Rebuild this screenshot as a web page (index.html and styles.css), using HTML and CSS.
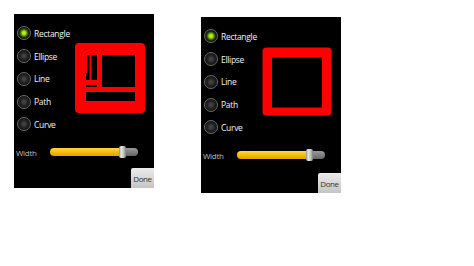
FILE: index.html
```html
<!DOCTYPE html>
<html lang="en">
<head>
  <meta charset="UTF-8">
  <title>Shape Drawing</title>
  <link rel="stylesheet" href="styles.css">
</head>
<body>
  <div class="shots">

    <div class="phone">
      <div class="main">
        <div class="choices">
          <div class="choice checked"><span class="radio"></span>Rectangle</div>
          <div class="choice"><span class="radio"></span>Ellipse</div>
          <div class="choice"><span class="radio"></span>Line</div>
          <div class="choice"><span class="radio"></span>Path</div>
          <div class="choice"><span class="radio"></span>Curve</div>
        </div>
        <svg class="canvas" width="80" height="80" viewBox="0 0 80 80">
          <path fill="#f00" fill-rule="evenodd" d="M7 3 H69 Q73 3 73 7 V69 Q73 73 69 73 H7 Q3 73 3 69 V7 Q3 3 7 3 Z M14 15 V61 H63 V15 Z"/>
          <rect x="25" y="15" width="5" height="37" fill="#f00"/>
          <rect x="14" y="47" width="49" height="5" fill="#f00"/>
          <rect x="17.5" y="15" width="2" height="30" fill="#f00"/>
          <rect x="14" y="40" width="12" height="5" fill="#f00"/>
          <rect x="14" y="15" width="1" height="18" fill="#f00"/>
        </svg>
      </div>
      <div class="width-row">
        <span class="label">Width</span>
        <div class="slider">
          <div class="fill"></div>
          <div class="thumb"></div>
          <div class="rest"></div>
        </div>
      </div>
      <div class="footer">
        <button class="done">Done</button>
      </div>
    </div>

    <div class="phone second">
      <div class="main">
        <div class="choices">
          <div class="choice checked"><span class="radio"></span>Rectangle</div>
          <div class="choice"><span class="radio"></span>Ellipse</div>
          <div class="choice"><span class="radio"></span>Line</div>
          <div class="choice"><span class="radio"></span>Path</div>
          <div class="choice"><span class="radio"></span>Curve</div>
        </div>
        <svg class="canvas" width="80" height="80" viewBox="0 0 80 80">
          <path fill="#f00" fill-rule="evenodd" d="M8 4.5 H69 Q72.5 4.5 72.5 8 V69 Q72.5 72.5 69 72.5 H8 Q3.5 72.5 3.5 69 V8 Q3.5 4.5 8 4.5 Z M13 14.5 V64.5 H63 V14.5 Z"/>
        </svg>
      </div>
      <div class="width-row">
        <span class="label">Width</span>
        <div class="slider">
          <div class="fill"></div>
          <div class="thumb"></div>
          <div class="rest"></div>
        </div>
      </div>
      <div class="footer">
        <button class="done">Done</button>
      </div>
    </div>

  </div>
</body>
</html>
```
FILE: styles.css
```css
body {
  margin: 0;
  background-color: #fff;
  font-family: "Open Sans", "Liberation Sans", sans-serif;
}
.shots {
  display: flex;
  align-items: flex-start;
  gap: 47px;
  padding: 14px 0 0 14px;
}
.phone {
  width: 140px;
  height: 174px;
  background-color: #000;
  display: flex;
  flex-direction: column;
}
.phone.second {
  margin-top: 3px;
  height: 176px;
}
.main {
  display: flex;
  height: 131px;
}
.choices {
  width: 58px;
  padding-top: 8px;
}
.choice {
  height: 22.75px;
  display: flex;
  align-items: center;
  gap: 3px;
  padding-left: 3px;
  color: #f4f4f4;
  font-size: 8.5px;
  letter-spacing: -0.3px;
  white-space: nowrap;
}
.radio {
  width: 12px;
  height: 12px;
  border-radius: 50%;
  border: 1px solid #6a6a6a;
  background: radial-gradient(circle, #484848 0, #383838 2px, #242424 3.5px, #181818 6px);
  box-shadow: inset 0 0 1px #000;
}
.checked .radio {
  background: radial-gradient(circle, #d0ff40 0, #96d800 2px, #4e8600 3.2px, #1e2a0e 4.6px, #181818 6px);
}
.canvas {
  margin-top: 26px;
}
.width-row {
  height: 14px;
  display: flex;
  align-items: center;
}
.label {
  width: 34px;
  padding-left: 2px;
  font-size: 8px;
  letter-spacing: -0.3px;
  color: #bdbdbd;
}
.slider {
  display: flex;
  align-items: center;
  width: 88px;
}
.fill {
  width: 69px;
  height: 8px;
  border-radius: 4px 0 0 4px;
  background: linear-gradient(#ffd84a, #f5b800 60%, #e6a000);
}
.thumb {
  width: 7px;
  height: 12px;
  border-radius: 2px;
  background: linear-gradient(90deg, #8a8a8a, #e8e8e8 30%, #bdbdbd 70%, #7a7a7a);
}
.rest {
  width: 12px;
  height: 8px;
  border-radius: 0 4px 4px 0;
  background: linear-gradient(#9a9a9a, #666);
}
.footer {
  flex: 1;
  display: flex;
  justify-content: flex-end;
  align-items: flex-end;
}
.done {
  width: 23px;
  height: 20px;
  padding: 0;
  border: none;
  border-radius: 2px 0 0 0;
  background: linear-gradient(#ececec, #c4c4c4);
  color: #333;
  font-family: "Open Sans", "Liberation Sans", sans-serif;
  font-size: 8px;
  letter-spacing: -0.4px;
}
```
